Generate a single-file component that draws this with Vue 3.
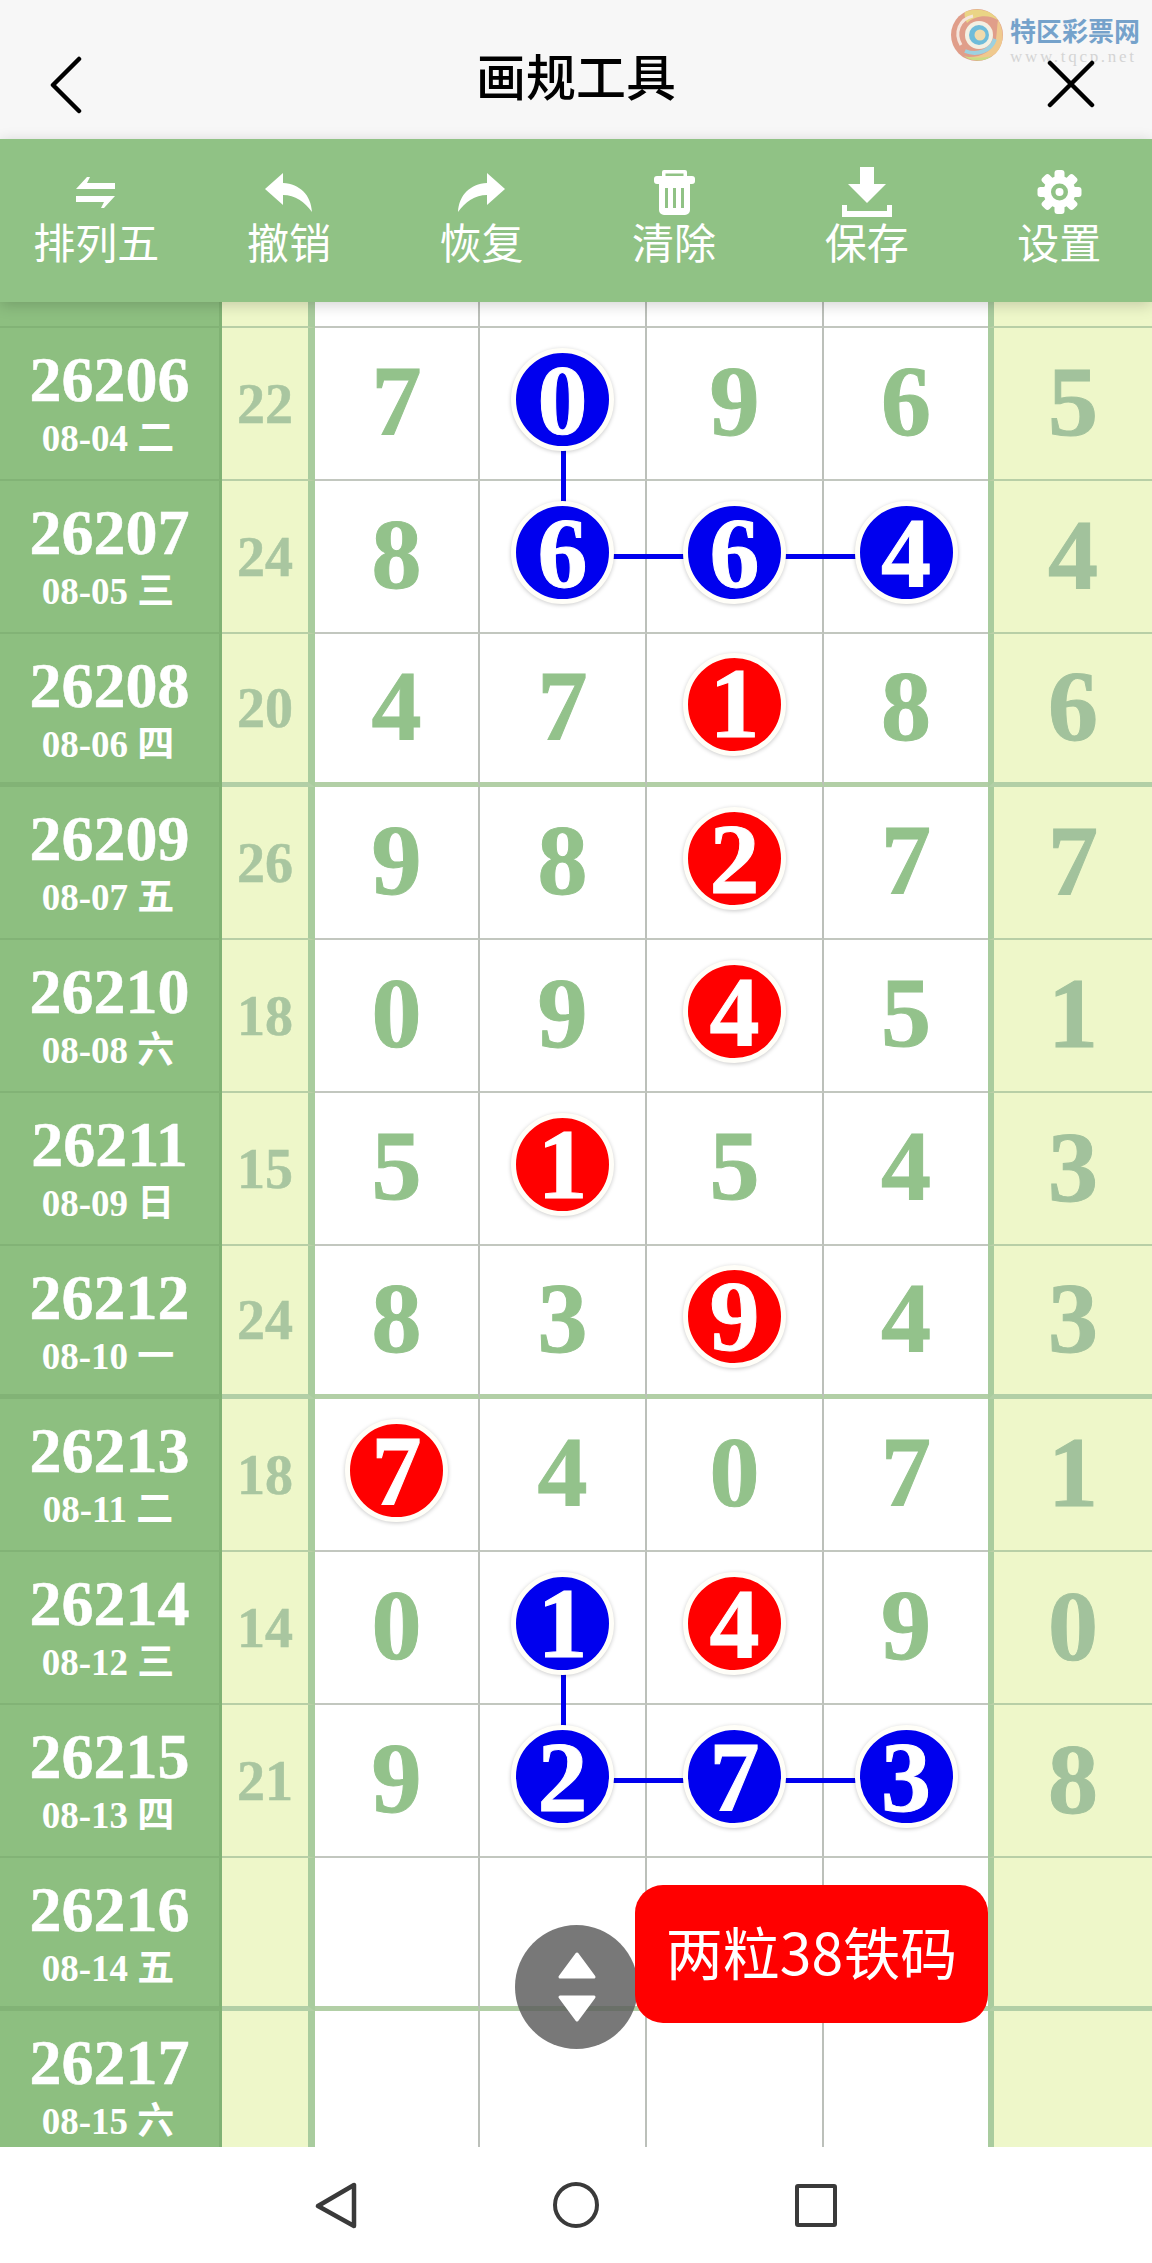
<template>
  <div class="page">
    <header class="topbar">
      <svg class="back" viewBox="0 0 34 58" fill="none" stroke="#000" stroke-width="4.5" stroke-linecap="round" stroke-linejoin="round">
        <path d="M30 3 L4 29 L30 55" />
      </svg>
      <h1 class="title">画规工具</h1>
      <div class="logo">
        <svg class="logo-mark" viewBox="0 0 52 52">
          <circle cx="26" cy="26" r="26" fill="#dd8f78" />
          <path d="M14 3C24-2 40 0 47 11 38 5 24 6 16 14 14 10 13 6 14 3z" fill="#e8cf72" />
          <path d="M47 11c7 11 6 26-3 34-8 6-20 8-29 3 14 1 27-5 30-18 1-7 1-13 2-19z" fill="#eec27c" />
          <path d="M13 47c8 6 20 6 28 0-8 2-20 2-28 0z" fill="#c3d870" />
          <path d="M10 36C3 24 8 10 22 7" fill="none" stroke="#f5e3d8" stroke-width="3" />
          <path d="M14 42c12 5 26 0 30-12" fill="none" stroke="#8ecbdc" stroke-width="4" />
          <circle cx="28" cy="26" r="14" fill="#f3efe0" />
          <circle cx="28" cy="26" r="10" fill="#58b2d6" />
          <circle cx="29" cy="26" r="5.5" fill="#f0d7a0" />
        </svg>
        <div class="logo-text">
          <span class="logo-name">特区彩票网</span>
          <span class="logo-url">www.tqcp.net</span>
        </div>
      </div>
      <svg class="close" viewBox="0 0 48 48" stroke="#000" stroke-width="4.5" stroke-linecap="round">
        <path d="M3 3 L45 45 M45 3 L3 45" />
      </svg>
    </header>

    <nav class="toolbar">
      <div class="tool">
        <div class="icon-box">
          <svg width="40" height="31" viewBox="0 0 40 31" fill="#fff">
            <path d="M0 12 L11 0 H14 L11 6 H39 V12 Z" />
            <path d="M0 19 H39 L28 31 H25 L28 25 H0 Z" />
          </svg>
        </div>
        <span>排列五</span>
      </div>
      <div class="tool">
        <div class="icon-box">
          <svg width="47" height="39" viewBox="0 0 47 39" fill="#fff">
            <path d="M0 16 L18 0 V10 C35 11 46 22 47 39 C40 29 30 22 18 22 V32 Z" />
          </svg>
        </div>
        <span>撤销</span>
      </div>
      <div class="tool">
        <div class="icon-box">
          <svg width="47" height="39" viewBox="0 0 47 39" fill="#fff">
            <path d="M47 16 L29 0 V10 C12 11 1 22 0 39 C7 29 17 22 29 22 V32 Z" />
          </svg>
        </div>
        <span>恢复</span>
      </div>
      <div class="tool">
        <div class="icon-box">
          <svg width="41" height="45" viewBox="0 0 41 45" fill="#fff">
            <path fill-rule="evenodd" d="M10 0 H31 A2 2 0 0 1 33 2 V7 H29.500 V3.500 H11.500 V7 H8 V2 A2 2 0 0 1 10 0 Z" />
            <rect x="0" y="6" width="41" height="8" rx="3" />
            <path fill-rule="evenodd" d="M5 13 H36 V40 A5 5 0 0 1 31 45 H10 A5 5 0 0 1 5 40 Z M11 18 V38 H14 V18 Z M19 18 V38 H22 V18 Z M27 18 V38 H30 V18 Z" />
          </svg>
        </div>
        <span>清除</span>
      </div>
      <div class="tool">
        <div class="icon-box">
          <svg width="50" height="50" viewBox="0 0 50 50" fill="#fff">
            <path d="M18 0 H32 V17 H44 L25 36 L6 17 H18 Z" />
            <path d="M0 38 H5 V44 H45 V38 H50 V50 H0 Z" />
          </svg>
        </div>
        <span>保存</span>
      </div>
      <div class="tool">
        <div class="icon-box">
          <svg width="45" height="44" viewBox="0 0 45 44" fill="#fff">
            <g transform="translate(22.500 22)">
              <circle r="16" />
              <rect v-for="a in [0, 45, 90, 135]" :key="a" x="-5" y="-22" width="10" height="44" rx="3" :transform="`rotate(${a})`" />
              <circle r="8.500" fill="#90c285" />
              <circle r="4" />
            </g>
          </svg>
        </div>
        <span>设置</span>
      </div>
    </nav>

    <main class="list">
      <div class="row row-head">
        <div class="issue"></div>
        <div class="sum"></div>
        <div class="cell"></div>
        <div class="cell"></div>
        <div class="cell"></div>
        <div class="cell"></div>
        <div class="extra"></div>
      </div>
      <div v-for="row in rows" :key="row.id" class="row" :class="{ heavy: row.heavy }">
        <div class="issue">
          <span class="issue-no">{{ row.id }}</span>
          <span class="issue-date">{{ row.date }}</span>
        </div>
        <div class="sum">{{ row.sum }}</div>
        <div v-for="(c, i) in row.cells" :key="i" class="cell">
          <span v-if="c" :class="ballClass(c)">{{ c.n }}</span>
          <i v-if="c && c.down" class="link-down"></i>
          <i v-if="c && c.right" class="link-right"></i>
        </div>
        <div class="extra"><span>{{ row.extra }}</span></div>
      </div>
    </main>

    <div class="updown">
      <svg viewBox="0 0 40 72" fill="#fff" stroke="#fff" stroke-width="3" stroke-linejoin="round">
        <path d="M20 3 L37 26 H3 Z" />
        <path d="M20 69 L37 46 H3 Z" />
      </svg>
    </div>
    <div class="tip">两粒38铁码</div>

    <footer class="sysnav">
      <svg class="nav-back" viewBox="0 0 42 47" fill="none" stroke="#3a3a3a" stroke-width="4.500" stroke-linejoin="round">
        <path d="M3 24 L39 3 V44 Z" />
      </svg>
      <span class="nav-home"></span>
      <span class="nav-recent"></span>
    </footer>
  </div>
</template>

<script setup>
// r = red ball, b = blue ball, plain number = normal digit
const raw = [
  ['26206', '08-04 二', 22, ['7', 'b0d', '9', '6'], 5],
  ['26207', '08-05 三', 24, ['8', 'b6r', 'b6r', 'b4'], 4],
  ['26208', '08-06 四', 20, ['4', '7', 'r1', '8'], 6, true],
  ['26209', '08-07 五', 26, ['9', '8', 'r2', '7'], 7],
  ['26210', '08-08 六', 18, ['0', '9', 'r4', '5'], 1],
  ['26211', '08-09 日', 15, ['5', 'r1', '5', '4'], 3],
  ['26212', '08-10 一', 24, ['8', '3', 'r9', '4'], 3, true],
  ['26213', '08-11 二', 18, ['r7', '4', '0', '7'], 1],
  ['26214', '08-12 三', 14, ['0', 'b1d', 'r4', '9'], 0],
  ['26215', '08-13 四', 21, ['9', 'b2r', 'b7r', 'b3'], 8],
  ['26216', '08-14 五', '', ['', '', '', ''], '', true],
  ['26217', '08-15 六', '', ['', '', '', ''], ''],
]

function parseCell(s) {
  if (!s) return null
  if (s[0] === 'r' || s[0] === 'b') {
    return { n: s[1], color: s[0], down: s[2] === 'd', right: s[2] === 'r' }
  }
  return { n: s }
}

const rows = raw.map(([id, date, sum, cells, extra, heavy]) => ({
  id, date, sum, extra, heavy, cells: cells.map(parseCell),
}))

function ballClass(c) {
  if (!c.color) return 'digit'
  return c.color === 'r' ? 'ball red' : 'ball blue'
}
</script>

<style>
html, body { margin: 0; background: #fff; }
</style>

<style scoped>
.page {
  position: relative;
  width: 1152px;
  height: 2263px;
  display: flex;
  flex-direction: column;
  overflow: hidden;
  font-family: "Liberation Serif", "Noto Sans CJK SC", serif;
}

.topbar {
  position: relative;
  flex: 0 0 139px;
  display: flex;
  align-items: center;
  justify-content: center;
  background: #f7f7f7;
}
.title {
  margin: 0;
  padding-top: 9px;
  font: 500 50px/60px "Noto Sans CJK SC", sans-serif;
  color: #000;
}
.back {
  position: absolute;
  left: 49px;
  top: 56px;
  width: 34px;
  height: 58px;
}
.close {
  position: absolute;
  left: 1047px;
  top: 60px;
  width: 48px;
  height: 48px;
}
.logo {
  position: absolute;
  left: 951px;
  top: 9px;
  display: flex;
  gap: 7px;
  align-items: flex-start;
  opacity: .85;
}
.logo-mark { width: 52px; height: 52px; }
.logo-text { display: flex; flex-direction: column; padding-top: 5px; }
.logo-name {
  font: 700 26px/32px "Noto Sans CJK SC", sans-serif;
  color: #5f94c4;
}
.logo-url {
  margin-top: 1px;
  font: 17px/20px "Liberation Serif", serif;
  letter-spacing: 2.700px;
  color: #cfcfcf;
}

.toolbar {
  position: relative;
  z-index: 2;
  flex: 0 0 163px;
  display: grid;
  grid-template-columns: repeat(6, 192.600px);
  background: #90c285;
  box-shadow: 0 3px 14px rgba(0, 0, 0, .18);
}
.tool {
  display: flex;
  flex-direction: column;
  align-items: center;
  padding-top: 27px;
  color: #fff;
  font: 42px/46px "Noto Sans CJK SC", sans-serif;
}
.icon-box {
  height: 52px;
  display: flex;
  align-items: center;
}

.list { flex: 1; overflow: hidden; }
.row {
  display: grid;
  grid-template-columns: 222px 93px 165px 167px 177px 164px 164px;
  height: 153px;
  box-sizing: border-box;
}
.row-head { height: 26px; }
.row > div {
  box-sizing: border-box;
  border-bottom: 2px solid #c2c7bf;
}
.row.heavy > div { border-bottom: 5px solid #b2cfa6; }

.issue {
  display: flex;
  flex-direction: column;
  align-items: center;
  padding-top: 16px;
  background: #8dbf80;
  border-right: 3px solid #80b274;
  color: #fff;
  font-weight: 700;
}
.row > .issue { border-bottom-color: #82b376; }
.row.heavy > .issue { border-bottom-color: #82b376; }
.issue-no { font-size: 64px; line-height: 71px; -webkit-text-stroke: .5px #fff; }
.issue-date { font-size: 37px; line-height: 48px; font-weight: 700; margin-right: 3px; }

.sum {
  display: flex;
  align-items: center;
  justify-content: center;
  background: #eef7c9;
  border-right: 7px solid #a9cc9e;
  color: #a9c6a0;
  font-size: 56px;
  font-weight: 700;
  -webkit-text-stroke: .5px #a9c6a0;
}
.row > .sum { border-bottom-color: #b8cfa6; }

.cell {
  position: relative;
  display: flex;
  align-items: center;
  justify-content: center;
  background: #fff;
  border-right: 2px solid #bcc0ba;
}
.cell:nth-child(6) { border-right: 0; }
.digit {
  margin-bottom: 5px;
  color: #93c28b;
  font-size: 100px;
  line-height: 1;
  font-weight: 700;
  -webkit-text-stroke: 1px #93c28b;
}

.ball {
  position: relative;
  z-index: 2;
  width: 93px;
  height: 93px;
  margin-bottom: 8px;
  border: 5px solid #fffef8;
  border-radius: 50%;
  display: flex;
  align-items: center;
  justify-content: center;
  color: #fff;
  font-size: 100px;
  line-height: 1;
  font-weight: 700;
  -webkit-text-stroke: 1px #fff;
  box-shadow: 0 1px 4px rgba(0, 0, 0, .22);
}
.red { background: #f00; }
.blue { background: #00e; }

.link-down {
  position: absolute;
  z-index: 1;
  left: 50%;
  top: 76px;
  width: 5px;
  height: 153px;
  margin-left: -2px;
  background: #00e;
}
.link-right {
  position: absolute;
  z-index: 1;
  left: 50%;
  top: 73px;
  width: 172px;
  height: 5px;
  background: #00e;
}

.extra {
  display: flex;
  align-items: center;
  justify-content: center;
  background: #eef7c9;
  border-left: 6px solid #a9cc9e;
  color: #a2c29c;
  font-size: 100px;
  font-weight: 700;
  -webkit-text-stroke: 1px #a2c29c;
}
.extra span { margin-bottom: 5px; }
.row > .extra { border-bottom-color: #b8cfa6; }

.updown {
  position: absolute;
  z-index: 3;
  left: 515px;
  top: 1925px;
  width: 123px;
  height: 124px;
  border-radius: 50%;
  background: rgba(90, 90, 90, .82);
  display: flex;
  align-items: center;
  justify-content: center;
}
.updown svg { width: 40px; height: 72px; }

.tip {
  position: absolute;
  z-index: 4;
  left: 635px;
  top: 1885px;
  width: 353px;
  height: 138px;
  border-radius: 28px;
  background: #f00;
  color: #fff;
  font: 57px/130px "Noto Sans CJK SC", sans-serif;
  text-align: center;
}

.sysnav {
  position: relative;
  z-index: 3;
  flex: 0 0 116px;
  background: #fff;
  display: grid;
  grid-template-columns: 315px 42px 196px 46px 196px 42px;
  align-items: center;
}
.nav-back { grid-column: 2; width: 42px; height: 47px; }
.nav-home {
  grid-column: 4;
  box-sizing: border-box;
  width: 46px;
  height: 46px;
  border: 4.500px solid #3a3a3a;
  border-radius: 50%;
}
.nav-recent {
  grid-column: 6;
  box-sizing: border-box;
  width: 42px;
  height: 43px;
  border: 4.500px solid #3a3a3a;
  border-radius: 3px;
}
</style>
